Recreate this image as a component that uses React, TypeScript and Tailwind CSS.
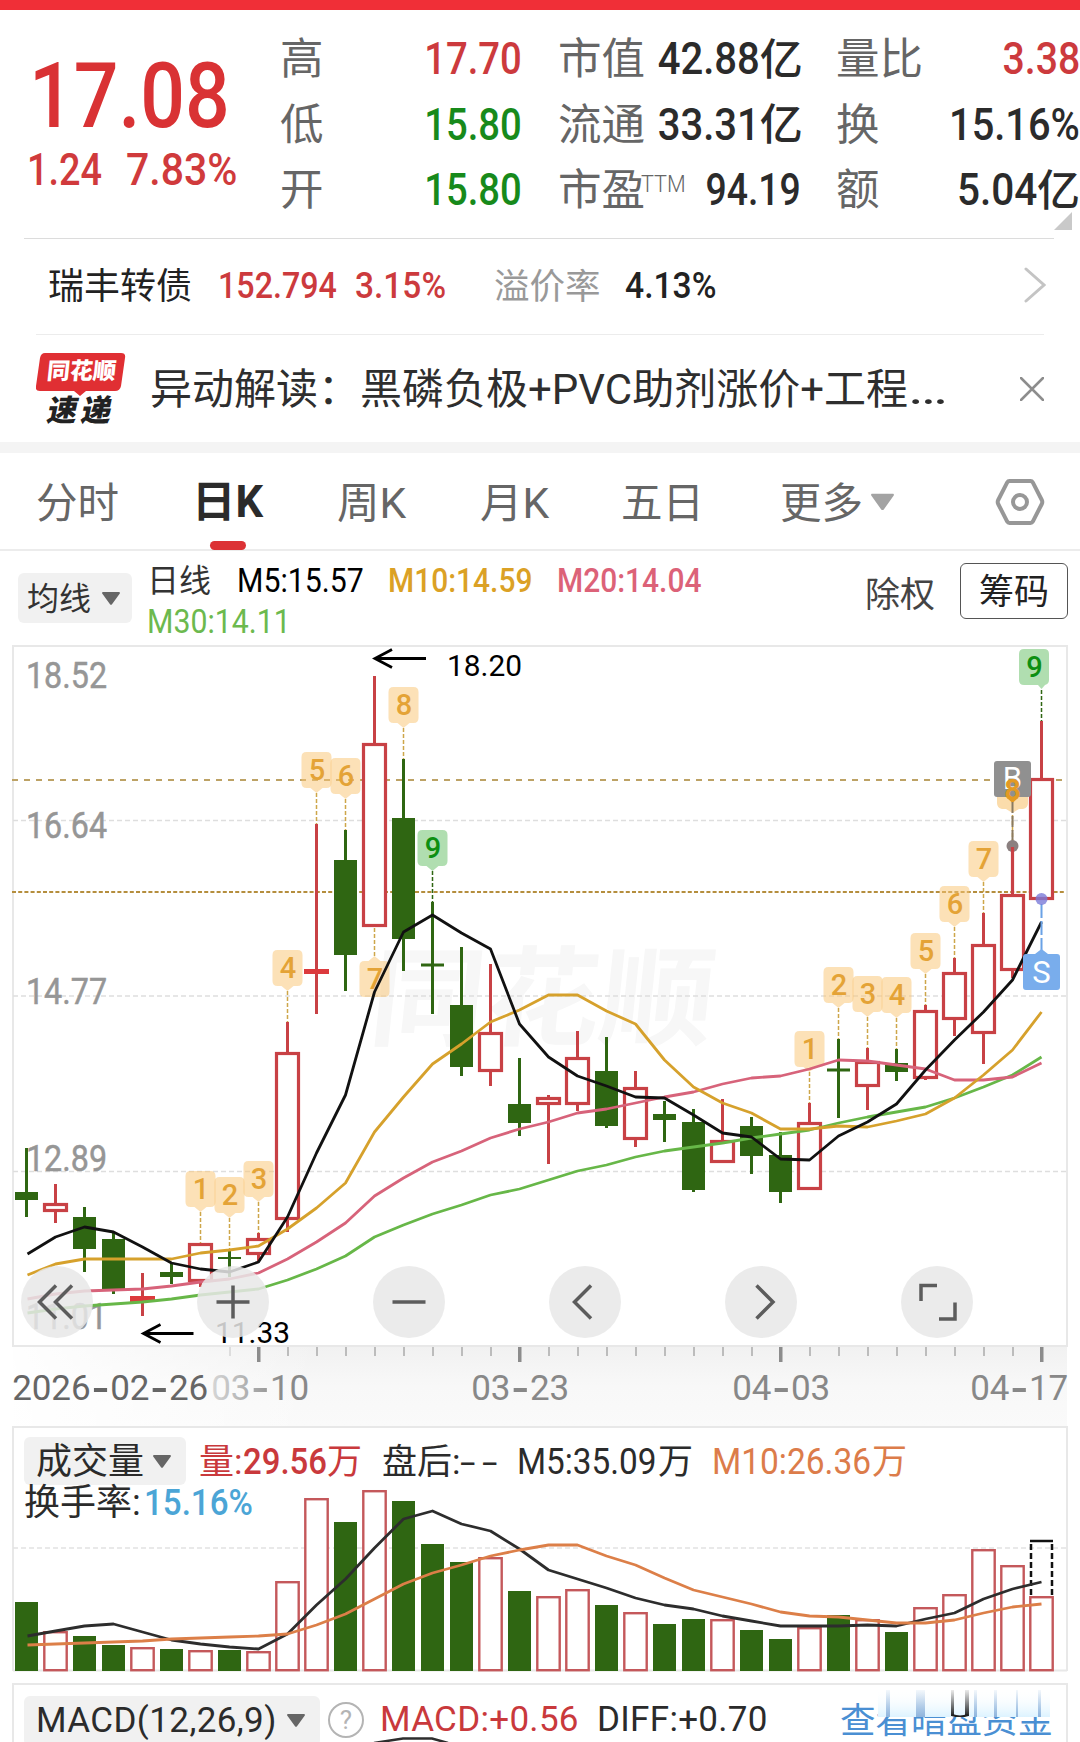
import React from 'react';

// ============================================
// DATA
// ============================================

type Candle = {
  up: boolean;
  high: number;
  top: number;
  bottom: number;
  low: number;
};

const c = (up: number, high: number, top: number, bottom: number, low: number): Candle => ({
  up: up === 1,
  high,
  top,
  bottom,
  low,
});

const candles: Candle[] = [
  c(0, 1148, 1192, 1200, 1217),
  c(1, 1184, 1203, 1212, 1223),
  c(0, 1207, 1217, 1249, 1272),
  c(0, 1232, 1239, 1290, 1294),
  c(1, 1273, 1296, 1302, 1316),
  c(0, 1263, 1272, 1277, 1284),
  c(1, 1243, 1243, 1282, 1287),
  c(0, 1249, 1257, 1259, 1277),
  c(1, 1233, 1238, 1255, 1261),
  c(1, 1022, 1052, 1220, 1232),
  c(1, 824, 969, 974, 1014),
  c(0, 830, 860, 955, 991),
  c(1, 676, 743, 927, 927),
  c(0, 759, 818, 939, 971),
  c(0, 902, 963.5, 966.5, 1014),
  c(0, 947, 1005, 1067, 1076),
  c(1, 964, 1032, 1072, 1086),
  c(0, 1058, 1104, 1123, 1136),
  c(1, 1095, 1097, 1105, 1164),
  c(1, 1031, 1057, 1105, 1111),
  c(0, 1037, 1071, 1126, 1128),
  c(1, 1071, 1087, 1140, 1147),
  c(0, 1101, 1114, 1120, 1142),
  c(0, 1109, 1122, 1190, 1192),
  c(1, 1099, 1140, 1163, 1163),
  c(0, 1117, 1126, 1156, 1174),
  c(0, 1132, 1155, 1192, 1203),
  c(1, 1103, 1122, 1190, 1190),
  c(0, 1039, 1068.5, 1071.5, 1118),
  c(1, 1048, 1061, 1087, 1110),
  c(0, 1049, 1063, 1072, 1081),
  c(1, 1005, 1010, 1079, 1080),
  c(1, 958, 972, 1020, 1036),
  c(1, 913, 944, 1034, 1064),
  c(1, 846, 894, 971, 978),
  c(1, 721, 778, 900, 900),
];

const ma5 = [
  1254, 1237, 1227, 1232, 1247, 1263, 1269, 1272, 1262, 1217, 1153, 1095, 992, 932, 915, 933, 949, 1024,
  1057, 1076, 1086, 1097, 1098, 1115, 1133, 1137, 1159, 1160, 1136, 1122, 1104, 1070, 1040, 1012, 980, 922,
];
const ma10 = [
  1275, 1264, 1259, 1259, 1259, 1259, 1253, 1250, 1246, 1229, 1208, 1183, 1132, 1097, 1064, 1044, 1022, 1010,
  995, 995, 1011, 1024, 1060, 1087, 1103, 1113, 1129, 1129, 1126, 1127, 1121, 1114, 1098, 1075, 1050, 1012,
];
const ma20 = [
  1299, 1294, 1291, 1290, 1289, 1286, 1282, 1279, 1273, 1259, 1242, 1223, 1196, 1178, 1162, 1151, 1138, 1129,
  1122, 1113, 1109, 1103, 1097, 1092, 1084, 1078, 1076, 1069, 1060, 1061, 1065, 1069, 1080, 1080, 1077, 1063,
];
const ma30 = [
  1313, 1309, 1306, 1304, 1302, 1299, 1295, 1292, 1289, 1280, 1269, 1256, 1237, 1225, 1214, 1205, 1195, 1189,
  1180, 1171, 1165, 1157, 1151, 1147, 1143, 1138, 1134, 1130, 1123, 1117, 1112, 1107, 1098, 1087, 1075, 1057,
];

const volumes = [
  1602, 1631, 1636, 1645, 1647, 1649, 1650, 1650, 1651, 1581, 1498, 1522, 1490, 1501, 1544, 1562, 1557, 1591,
  1596, 1589, 1605, 1612, 1624, 1619, 1619, 1630, 1639, 1627, 1615, 1619, 1632, 1607, 1594, 1549, 1565, 1596,
];
const vol5 = [
  1636, 1631, 1626, 1624, 1632, 1640, 1644, 1647, 1649, 1634, 1605, 1579, 1548, 1519, 1511, 1524, 1531, 1549,
  1570, 1579, 1588, 1598, 1605, 1609, 1616, 1621, 1626, 1626, 1626, 1625, 1626, 1619, 1613, 1599, 1589, 1582,
];
const vol10 = [
  1645, 1644, 1643, 1642, 1641, 1639, 1638, 1637, 1636, 1634, 1625, 1614, 1599, 1584, 1573, 1565, 1556, 1550,
  1545, 1545, 1556, 1565, 1578, 1590, 1597, 1604, 1612, 1616, 1617, 1620, 1623, 1623, 1620, 1613, 1607, 1604,
];

// index of the candle -> sequence number
const marks: [number, string][] = [
  [6, '1'],
  [7, '2'],
  [8, '3'],
  [9, '4'],
  [10, '5'],
  [11, '6'],
  [13, '8'],
  [14, '9'],
  [27, '1'],
  [28, '2'],
  [29, '3'],
  [30, '4'],
  [31, '5'],
  [32, '6'],
  [33, '7'],
  [34, '8'],
];

const priceLabels: [string, number][] = [
  ['18.52', 688],
  ['16.64', 838],
  ['14.77', 1004],
  ['12.89', 1171],
  ['11.01', 1329],
];

const dates: [string, number, string][] = [
  ['2026-02-26', 12, '#666'],
  ['03-10', 211, 'url(#dateFade)'],
  ['03-23', 471, '#888'],
  ['04-03', 732, '#888'],
  ['04-17', 970, '#888'],
];

const RED = '#c84145';
const GREEN = '#2f6612';

const cx = (i: number) => 26.5 + i * 29;
const points = (ys: number[]) => ys.map((y, i) => `${cx(i) + (i === 0 ? 1 : 0)},${y}`).join(' ');

// ============================================
// SMALL PIECES
// ============================================

// Narrow figures
const Num: React.FC<{ className?: string; light?: boolean; children: React.ReactNode }> = ({
  className = 'scale-x-[0.87]',
  light,
  children,
}) => (
  <span className={`inline-block whitespace-nowrap ${light ? 'font-normal' : 'font-medium'} ${className}`}>
    {children}
  </span>
);

const Caret: React.FC<{ className?: string }> = ({ className = 'w-[18px] h-[13px]' }) => (
  <svg viewBox="0 0 18 13" className={`shrink-0 ${className}`} fill="currentColor">
    <path d="M1 0h16c.8 0 1.200.8.8 1.400L10 12.300c-.5.700-1.500.7-2 0L.2 1.400C-.2.800.2 0 1 0z" />
  </svg>
);

const Stat: React.FC<{ label: string; sup?: string; width: string; children: React.ReactNode }> = ({
  label,
  sup,
  width,
  children,
}) => (
  <div className={`flex h-[65.5px] items-center justify-between ${width}`}>
    <span className="-ml-px flex shrink-0 whitespace-nowrap pt-[3px] text-[43.5px] text-[#666]">
      {label}
      {sup && (
        <span className="-ml-1 mt-[8px] origin-left scale-x-[0.9] text-[24px] font-light leading-none">{sup}</span>
      )}
    </span>
    <span className="flex items-center pt-px">{children}</span>
  </div>
);

const Yi: React.FC = () => <span className="pt-[3px] text-[43px] font-medium">亿</span>;

const Badge: React.FC<{ x: number; y: number; text: string; tip?: number; green?: boolean }> = ({
  x,
  y,
  text,
  tip = 15,
  green,
}) => (
  <g transform={`translate(${x - 15} ${y})`}>
    <path
      d={
        tip === 15
          ? 'M5 0h20q5 0 5 5v26q0 5-5 5h-4l-6 5-6-5H5q-5 0-5-5V5q0-5 5-5z'
          : 'M5 0h20q5 0 5 5v26q0 4-4 5l-3.500 4-3.500-4H5q-5 0-5-5V5q0-5 5-5z'
      }
      fill={green ? '#8ed08f' : '#f9c675'}
      fillOpacity={green ? 0.7 : 0.52}
    />
    <text
      x="15.500"
      y="27.500"
      textAnchor="middle"
      className="text-[29px] font-medium"
      fill={green ? '#0d8f12' : '#e4a336'}
    >
      {text}
    </text>
  </g>
);

// ============================================
// QUOTE HEADER
// ============================================

const QuoteHeader: React.FC = () => (
  <header className="relative h-[229px] pt-4">
    <div className="flex">
      <div className="w-[281px] shrink-0 pl-[29px] text-[#d93234]">
        <div className="flex h-[106px] items-center pt-[35px] text-[91px]">
          <Num className="origin-left scale-x-[0.865]">17.08</Num>
        </div>
        <div className="-ml-[2px] flex h-[78px] items-center text-[44.500px] text-[#d03a3c]">
          <Num className="w-[99px] origin-left scale-x-[0.85]">1.24</Num>
          <Num className="origin-left scale-x-[0.92]">7.83%</Num>
        </div>
      </div>

      <div className="w-[278px] shrink-0 text-[45px]">
        <Stat label="高" width="w-[241px]">
          <Num className="origin-right scale-x-[0.85] text-[#cc3a3d]">17.70</Num>
        </Stat>
        <Stat label="低" width="w-[241px]">
          <Num className="origin-right scale-x-[0.85] text-[#178a1b]">15.80</Num>
        </Stat>
        <Stat label="开" width="w-[241px]">
          <Num className="origin-right scale-x-[0.85] text-[#178a1b]">15.80</Num>
        </Stat>
      </div>

      <div className="w-[278px] shrink-0 text-[45px] text-[#2b2b2b]">
        <Stat label="市值" width="w-[241px]">
          <Num className="origin-right scale-x-[0.89]">42.88</Num>
          <Yi />
        </Stat>
        <Stat label="流通" width="w-[241px]">
          <Num className="origin-right scale-x-[0.89]">33.31</Num>
          <Yi />
        </Stat>
        <Stat label="市盈" sup="TTM" width="w-[242px]">
          <Num className="-ml-5 origin-right scale-x-[0.83]">94.19</Num>
        </Stat>
      </div>

      <div className="w-[243px] shrink-0 text-[45px] text-[#2b2b2b]">
        <Stat label="量比" width="w-[243px]">
          <Num className="origin-right scale-x-[0.87] text-[#cc3a3d]">3.38</Num>
        </Stat>
        <Stat label="换" width="w-[243px]">
          <Num className="origin-right scale-x-[0.885]">15.16%</Num>
        </Stat>
        <Stat label="额" width="w-[243px]">
          <Num className="origin-right scale-x-[0.9]">5.04</Num>
          <Yi />
        </Stat>
      </div>
    </div>
    <svg viewBox="0 0 18 18" className="absolute right-2 bottom-[9px] w-[18px] h-[18px]">
      <path d="M18 0v18H0z" fill="#c9c9c9" />
    </svg>
    <div className="absolute bottom-0 left-6 h-px w-[1030px] bg-[#dcdcdc]" />
  </header>
);

const BondRow: React.FC = () => (
  <div className="relative flex h-[96px] items-center pb-[2px] text-[36px]">
    <span className="ml-12 w-[170px] pt-[2px] text-[#222]">瑞丰转债</span>
    <Num className="w-[137px] origin-left scale-x-[0.895] text-[#cc3a3d]">152.794</Num>
    <Num className="w-[139px] origin-left scale-x-[0.93] text-[#cc3a3d]">3.15%</Num>
    <span className="w-[131px] pt-[2px] text-[35.500px] text-[#999]">溢价率</span>
    <Num className="origin-left scale-x-[0.935] text-[#222]">4.13%</Num>
    <svg viewBox="0 0 22 36" className="absolute left-[1024px] top-[28px] h-9 w-[22px]" fill="none">
      <path d="M2 2l18 16L2 34" stroke="#c4c4c4" strokeWidth="3" strokeLinecap="round" />
    </svg>
    <div className="absolute bottom-0 left-9 h-px w-[1008px] bg-[#ececec]" />
  </div>
);

const NewsRow: React.FC = () => (
  <div className="flex h-[107px] items-center">
    <div className="relative ml-9 h-[74px] w-[90px] shrink-0">
      <svg viewBox="0 0 90 44" className="absolute left-0 top-0 h-[44px] w-[90px]">
        <path d="M9 1h76q5 0 4 5l-4 28q-1 5-6 5H50l-6 5-6-5H4q-5 0-4-5L4 6q1-5 5-5z" fill="#e02f33" />
      </svg>
      <span className="absolute left-[11px] top-[7px] -skew-x-6 text-[23px] leading-[26px] font-black text-white">
        同花顺
      </span>
      <span className="absolute left-[12px] top-[43px] -skew-x-12 text-[30px] leading-[32px] font-black tracking-[4px] text-[#222]">
        速递
      </span>
    </div>
    <p className="ml-6 flex w-[860px] whitespace-nowrap pt-[4px] text-[42px] text-[#2e2e2e]">
      异动解读：黑磷负极+PVC助剂涨价+工程<span className="origin-left scale-x-[1.42]">…</span>
    </p>
    <svg viewBox="0 0 24 24" className="ml-[10px] h-6 w-6 shrink-0" fill="none">
      <path d="M1 1l22 22M23 1L1 23" stroke="#8d8d8d" strokeWidth="2.500" strokeLinecap="round" />
    </svg>
  </div>
);

const Tabs: React.FC = () => (
  <nav className="relative flex h-[98px] items-center border-b-2 border-[#ececec] pt-[5px] text-[41.500px] text-[#666]">
    <span className="ml-9 w-[156px]">分时</span>
    <span className="w-[145px] text-[43.500px] font-bold text-[#2b2b2b]">日K</span>
    <span className="w-[143px] text-[42.500px]">周K</span>
    <span className="w-[141px] text-[42.500px]">月K</span>
    <span className="w-[159px]">五日</span>
    <span>更多</span>
    <Caret className="mb-[3px] ml-2 h-[18px] w-[23px] text-[#a3a3a3]" />
    <svg viewBox="0 0 50 48" className="absolute left-[995px] top-[25px] h-12 w-[50px]" fill="none">
      <path
        d="M14.500 3h21q1.500 0 2.300 1.400l9 17.600q1 2 0 4l-9 17.600q-.8 1.400-2.300 1.400h-21q-1.500 0-2.300-1.400L3.200 26q-1-2 0-4l9-17.600Q13 3 14.500 3z"
        stroke="#979797"
        strokeWidth="4"
      />
      <circle cx="25" cy="24" r="7" stroke="#979797" strokeWidth="4" />
    </svg>
    <div className="absolute left-[210px] top-[88px] h-[9px] w-9 rounded-full bg-[#dc3235]" />
  </nav>
);

const AverageRow: React.FC = () => (
  <div className="flex h-[94px] text-[34px]">
    <button className="ml-[18px] mt-[22px] flex h-[50px] w-[114px] shrink-0 items-center rounded-md bg-[#f1f1f1] pl-[9px] text-[32px] text-[#333]">
      <span className="pt-[2px]">均线</span>
      <Caret className="ml-[11px] h-[13px] w-[18px] text-[#666]" />
    </button>
    <div className="ml-[15px] mt-[9px] flex w-[718px] shrink-0 flex-wrap content-start">
      <span className="flex h-[41px] w-[90px] items-center text-[32px] text-[#333]">日线</span>
      <span className="flex h-[41px] w-[151px] items-center">
        <Num light className="origin-left scale-x-[0.89] text-black">M5:15.57</Num>
      </span>
      <span className="flex h-[41px] w-[169px] items-center">
        <Num className="origin-left scale-x-[0.88] text-[#dba125]">M10:14.59</Num>
      </span>
      <span className="flex h-[41px] w-[200px] items-center">
        <Num className="origin-left scale-x-[0.88] text-[#dc6278]">M20:14.04</Num>
      </span>
      <span className="flex h-[41px] w-[600px] items-center">
        <Num light className="origin-left scale-x-[0.89] text-[#6cb94e]">M30:14.11</Num>
      </span>
    </div>
    <span className="mt-[23px] w-[95px] shrink-0 text-[35px] text-[#444]">除权</span>
    <button className="mt-[12px] h-[56px] w-[108px] shrink-0 rounded-md border border-[#555] pt-[3px] text-[35px] leading-[50px] text-[#222]">
      筹码
    </button>
  </div>
);

// ============================================
// CANDLESTICK CHART
// ============================================

const CandleShape: React.FC<{ i: number; d: Candle }> = ({ i, d }) => {
  const x = cx(i);
  const color = d.up ? RED : GREEN;
  if (!d.up) {
    return (
      <g fill={color}>
        <rect x={x - 1.5} y={d.high} width="3" height={d.low - d.high} />
        <rect x={x - 11.5} y={d.top} width="23" height={d.bottom - d.top} />
      </g>
    );
  }
  return (
    <g>
      <rect x={x - 1.5} y={d.high} width="3" height={d.top - d.high} fill={color} />
      <rect x={x - 1.5} y={d.bottom} width="3" height={d.low - d.bottom} fill={color} />
      {d.bottom - d.top < 7 ? (
        <>
          <rect x={x - 1.5} y={d.high} width="3" height={d.low - d.high} fill={color} />
          <rect x={x - 12.5} y={d.top} width="25" height={d.bottom - d.top} fill="#dc3a3d" />
        </>
      ) : (
        <rect
          x={x - 11}
          y={d.top + 1.5}
          width="22"
          height={d.bottom - d.top - 3}
          fill="white"
          stroke={color}
          strokeWidth="3.200"
        />
      )}
    </g>
  );
};

// Fixed-pitch date with a long hyphen
const AxisDate: React.FC<{ text: string; x: number; fill: string }> = ({ text, x, fill }) => (
  <text y="1400" fill={fill} textAnchor="middle" className="text-[35px]">
    {text.split('').map((ch, i) =>
      ch === '-' ? (
        <tspan key={i} x={x + 10 + i * 19.6} y="1403.5" className="font-['DejaVu_Sans'] text-[50px]">
          {ch}
        </tspan>
      ) : (
        <tspan key={i} x={x + 10 + i * 19.6} y="1400">
          {ch}
        </tspan>
      ),
    )}
  </text>
);

const controls: React.ReactNode[] = [
  <path d="M35 19.500L18.500 36 35 52.500M51 19.500L34.500 36 51 52.500" />,
  <path d="M19.500 36h33M36 19.500v33" />,
  <path d="M19.500 36h33" />,
  <path d="M42 19.500L25.500 36 42 52.500" />,
  <path d="M31.500 19.500L48 36 31.500 52.500" />,
  <path d="M20 35V19.500h16M54 36.500V53H38" />,
];

const KChart: React.FC = () => (
  <section className="relative h-[781px]">
    <svg viewBox="0 645 1080 781" className="block h-[781px] w-[1080px]">
      <defs>
        <linearGradient id="axisShade" x1="0" y1="0" x2="0" y2="1">
          <stop offset="0" stopColor="#f1f1f1" />
          <stop offset="0.5" stopColor="#f8f8f8" />
          <stop offset="1" stopColor="#fafafa" />
        </linearGradient>
        <linearGradient id="axisFade" x1="0" y1="0" x2="1" y2="0">
          <stop offset="0" stopColor="#fff" />
          <stop offset="1" stopColor="#fff" stopOpacity="0" />
        </linearGradient>
        <linearGradient id="dateFade" gradientUnits="userSpaceOnUse" x1="205" y1="0" x2="285" y2="0">
          <stop offset="0" stopColor="#ddd" />
          <stop offset="1" stopColor="#888" />
        </linearGradient>
      </defs>

      <rect x="13" y="1347" width="1054" height="79" fill="url(#axisShade)" />
      <rect x="0" y="1347" width="320" height="79" fill="url(#axisFade)" />

      <g transform="translate(357 1037) skewX(-6)">
        <text
          x="10"
          y="0"
          textLength="344"
          lengthAdjust="spacingAndGlyphs"
          className="text-[108px] font-bold"
          fill="#f7f7f7"
        >
          同花顺
        </text>
      </g>

      <rect x="13" y="646" width="1054" height="700" fill="none" stroke="#e8e8e8" strokeWidth="2" />
      <g stroke="#dedede" strokeWidth="1.500" strokeDasharray="5 3">
        <path d="M13 820.500H1066M13 996H1066M13 1171.500H1066" />
      </g>
      <path d="M12 780H1066" stroke="#bda265" strokeWidth="2" strokeDasharray="6 6" />
      <path d="M12 892H1066" stroke="#b58e3d" strokeWidth="2" strokeDasharray="4 2.200" />

      {priceLabels.map(([label, y]) => (
        <text
          key={label}
          x="26"
          y={y}
          textLength="81"
          lengthAdjust="spacingAndGlyphs"
          className="text-[36px]"
          fill="#969696"
          stroke="#969696"
          strokeWidth="0.500"
        >
          {label}
        </text>
      ))}

      {candles.map((d, i) => (
        <CandleShape key={i} i={i} d={d} />
      ))}

      {/* Sequence numbers */}
      <g stroke="#cda64a" strokeWidth="1.500" strokeDasharray="4 2">
        {marks.map(([i, text]) => (
          <path
            key={i}
            d={`M${cx(i)} ${candles[i].high - 31}V${candles[i].high}`}
            stroke={text === '9' ? '#2f6612' : undefined}
          />
        ))}
        <path d="M374.500 928V957" />
        <path d="M1041.500 690V721" stroke="#2f6612" />
      </g>
      {marks
        .filter(([i]) => i !== 34)
        .map(([i, text]) => (
          <Badge key={i} x={cx(i)} y={candles[i].high - 72} text={text} green={text === '9'} />
        ))}
      <Badge x={1034} y={649} text="9" tip={22} green />
      <path
        d="M364.500 961h4l6-5 6 5h4q5 0 5 5v26q0 5-5 5h-20q-5 0-5-5v-26q0-5 5-5z"
        fill="#f9c675"
        fillOpacity="0.520"
      />
      <text x="375" y="989" textAnchor="middle" className="text-[29px] font-medium" fill="#e4a336">
        7
      </text>

      {/* Averages */}
      <g fill="none" strokeLinejoin="round">
        <polyline points={points(ma30)} stroke="#67b748" strokeWidth="2.800" />
        <polyline points={points(ma20)} stroke="#d7637a" strokeWidth="2.800" />
        <polyline points={points(ma10)} stroke="#d6a12c" strokeWidth="2.800" />
        <polyline points={points(ma5)} stroke="#111" strokeWidth="2.800" />
      </g>

      {/* Buy marker */}
      <path d="M997 797h31v6q0 5-5 6h-4l-6.500 4-6.500-4h-4q-5-1-5-6z" fill="#fbdcab" />
      <rect x="994" y="761" width="37" height="36" rx="3" fill="#909090" />
      <text x="1012.500" y="789" textAnchor="middle" className="text-[31px]" fill="#fff">
        B
      </text>
      <path d="M1007 798h11l-5.500 5z" fill="#e39a23" />
      <text x="1012.500" y="799.500" textAnchor="middle" className="text-[29px] font-bold" fill="#e39a23">
        8
      </text>
      <path d="M1012.500 802V842" stroke="#8a7a60" strokeWidth="2" strokeDasharray="11 3" />
      <circle cx="1012.500" cy="846" r="6" fill="#8b8080" />
      <path d="M1012.500 847V893" stroke={RED} strokeWidth="3.200" />

      {/* Sell marker */}
      <path d="M1041.500 904V950" stroke="#6aa2e6" strokeWidth="2" strokeDasharray="14 3" />
      <circle cx="1041.500" cy="899" r="6" fill="#7a7ad8" fillOpacity="0.800" />
      <path d="M1026 954h9l6.500-5 6.500 5h9q3 0 3 3v30q0 3-3 3h-31q-3 0-3-3v-30q0-3 3-3z" fill="#79adec" />
      <text x="1041.500" y="983" textAnchor="middle" className="text-[31px]" fill="#fff">
        S
      </text>

      {/* Extremes */}
      <g stroke="#000" strokeWidth="2.800" fill="none">
        <path d="M426 658.500H375M392 649.500l-17 9 17 9" />
        <path d="M193.500 1333.500H143M160.500 1324.500l-17 9 17 9" />
      </g>
      <text x="447" y="676" textLength="75" lengthAdjust="spacingAndGlyphs" className="text-[30px]">
        18.20
      </text>
      <text x="215" y="1342.500" textLength="75" lengthAdjust="spacingAndGlyphs" className="text-[30px]">
        11.33
      </text>

      {/* Time axis */}
      {candles.map((_, i) =>
        i < 7 ? null : (i - 8) % 9 === 0 ? (
          <rect key={i} x={cx(i) - 1.5} y="1347" width="3.500" height="15" fill="#8c8c8c" />
        ) : (
          <rect key={i} x={cx(i) - 0.5} y="1347" width="2" height="9" fill={i === 7 ? '#ddd' : '#bcbcbc'} />
        ),
      )}
      {dates.map(([label, x, fill]) => (
        <AxisDate key={label} text={label} x={x} fill={fill} />
      ))}
    </svg>

    <div className="absolute left-[21px] top-[621px] flex gap-[104px]">
      {controls.map((icon, i) => (
        <button key={i} className="h-[72px] w-[72px] rounded-full bg-[#e8e8e8]/85">
          <svg viewBox="0 0 72 72" fill="none" stroke="#5c5c5c" strokeWidth="3.500">
            {icon}
          </svg>
        </button>
      ))}
    </div>
  </section>
);

// ============================================
// VOLUME + MACD
// ============================================

const VolumePanel: React.FC = () => (
  <section className="relative h-[257px]">
    <svg viewBox="0 1426 1080 257" className="absolute inset-0 h-[257px] w-[1080px]">
      <path d="M13 1671V1427H1067V1671" fill="none" stroke="#e8e8e8" strokeWidth="2" />
      <path d="M13 1670.500H1067" stroke="#e8e8e8" strokeWidth="2" />
      <path d="M13 1548H1066" stroke="#e2e2e2" strokeWidth="1.500" strokeDasharray="5 3" />
      {volumes.map((y, i) =>
        candles[i].up ? (
          <rect
            key={i}
            x={cx(i) - 11.2}
            y={y + 1.2}
            width="22.400"
            height={1671 - y - 2}
            fill="white"
            stroke="#c4585b"
            strokeWidth="2.400"
          />
        ) : (
          <rect key={i} x={cx(i) - 11.5} y={y} width="23" height={1671 - y} fill={GREEN} />
        ),
      )}
      <path d="M1031 1595V1541M1052 1595V1541" stroke="#111" strokeWidth="2.500" strokeDasharray="6 3" />
      <path d="M1030 1541H1053" stroke="#111" strokeWidth="2.500" />
      <g fill="none" strokeLinejoin="round" strokeWidth="2.800">
        <polyline points={points(vol5)} stroke="#2d2d2d" />
        <polyline points={points(vol10)} stroke="#dc7f48" />
      </g>
    </svg>

    <div className="relative pl-6 pt-[11px] text-[35px] text-[#2b2b2b]">
      <div className="flex h-[48px] items-center">
        <button className="flex h-[48px] w-[162px] items-center rounded-md bg-[#f1f1f1] pl-3">
          <span className="pt-[3px] text-[36px]">成交量</span>
          <Caret className="ml-[9px] h-[13px] w-[18px] text-[#666]" />
        </button>
        <span className="ml-[13px] flex w-[183px] items-center pt-[3px] text-[#c9393c]">
          <span className="w-[44px]">量:</span>
          <Num className="w-[84px] origin-left scale-x-[0.89] text-[37px]">29.56</Num>万
        </span>
        <span className="flex w-[135px] whitespace-nowrap pt-[3px]">
          盘后:<span className="origin-left scale-x-[1.6] tracking-[4px]">--</span>
        </span>
        <span className="flex w-[195px] items-center pt-[3px]">
          <Num light className="w-[141px] origin-left scale-x-[0.9] text-[37px]">M5:35.09</Num>万
        </span>
        <span className="flex items-center pt-[3px] text-[#dc7c4a]">
          <Num light className="w-[160px] origin-left scale-x-[0.905] text-[37px]">M10:26.36</Num>万
        </span>
      </div>
      <div className="flex h-[32px] items-center pt-[4px]">
        <span className="w-[120px] text-[36px]">换手率:</span>
        <Num className="origin-left scale-x-[0.92] text-[36px] text-[#4ba5d6]">15.16%</Num>
      </div>
    </div>
  </section>
);

const MacdPanel: React.FC = () => (
  <section className="relative ml-3 h-[59px] w-[1056px] border-2 border-b-0 border-[#e8e8e8] text-[35px] text-[#2b2b2b]">
    <div className="flex h-[70px] items-center pl-[10px]">
      <button className="relative mt-px flex h-[50px] w-[296px] items-center rounded-md bg-[#f1f1f1] pl-3">
        <span className="w-[251px] text-left tracking-[0.4px]">MACD(12,26,9)</span>
        <Caret className="h-[13px] w-[18px] text-[#666]" />
      </button>
      <span className="ml-2 flex h-9 w-9 items-center justify-center rounded-full border-2 border-[#b4b4b4] text-[26px] text-[#b4b4b4]">
        ?
      </span>
      <span className="ml-4 w-[217px] tracking-[0.3px] text-[#c9393c]">MACD:+0.56</span>
      <span className="w-[243px] tracking-[0.3px]">DIFF:+0.70</span>
      <a className="whitespace-nowrap pt-[3px] text-[35.500px] text-[#4a8fd3]">查看暗盘资金</a>
    </div>
    <div className="absolute left-[864px] top-[5px] h-[27px] w-[180px] overflow-hidden">
      <svg viewBox="0 0 180 27" className="h-[27px] w-[180px]">
        <defs>
          <linearGradient id="streak" x1="0" y1="0" x2="0" y2="1">
            <stop offset="0" stopColor="#fff" stopOpacity="0" />
            <stop offset="1" stopColor="#dcf3ff" />
          </linearGradient>
          <linearGradient id="streakBlue" x1="0" y1="0" x2="0" y2="1">
            <stop offset="0" stopColor="#8fb4dc" stopOpacity="0.100" />
            <stop offset="1" stopColor="#8fb4dc" />
          </linearGradient>
          <linearGradient id="streakDark" x1="0" y1="0" x2="0" y2="1">
            <stop offset="0" stopColor="#333" stopOpacity="0.100" />
            <stop offset="1" stopColor="#222" />
          </linearGradient>
        </defs>
        <rect width="180" height="27" fill="#fff" />
        <rect width="172" height="27" fill="url(#streak)" />
        <g fill="url(#streakBlue)">
          <rect x="8" y="0" width="4" height="27" />
          <rect x="38" y="0" width="9" height="27" />
          <rect x="96" y="0" width="3" height="27" />
          <rect x="116" y="0" width="3" height="27" />
          <rect x="138" y="0" width="2" height="27" />
          <rect x="160" y="0" width="3" height="27" />
        </g>
        <rect x="73" y="0" width="3" height="26" fill="url(#streakDark)" />
        <rect x="87" y="0" width="4" height="26" fill="url(#streakDark)" />
        <path d="M74 25q8 3 16 0" stroke="#222" strokeWidth="2" fill="none" />
      </svg>
    </div>
    <svg viewBox="0 0 80 6" className="absolute left-[358px] top-[52px] h-[6px] w-[80px]" fill="none">
      <path d="M2 6L31 1.500H60L76 6" stroke="#2d2d2d" strokeWidth="2.500" />
    </svg>
  </section>
);

const App: React.FC = () => (
  <div className="relative h-[1742px] w-[1080px] overflow-hidden bg-white font-['Roboto','Noto_Sans_CJK_SC',sans-serif] leading-tight">
    <div className="h-[10px] bg-[#f02f37]" />
    <QuoteHeader />
    <BondRow />
    <NewsRow />
    <div className="h-[11px] bg-[#f4f4f4]" />
    <Tabs />
    <AverageRow />
    <KChart />
    <VolumePanel />
    <MacdPanel />
  </div>
);

export default App;
